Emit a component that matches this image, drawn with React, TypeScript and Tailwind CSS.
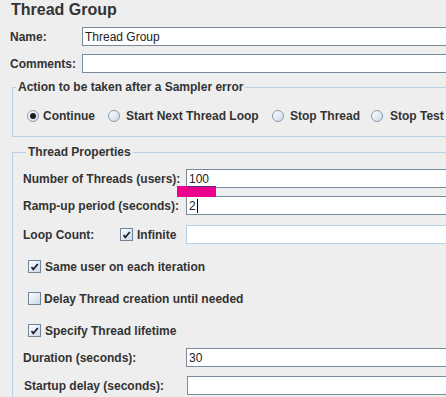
import React from "react";

function Radio({ on }: { on?: boolean }) {
  return (
    <span className="w-[12px] h-[12px] rounded-full border border-[#8a9bac] bg-linear-to-br from-white to-[#cbdaea] flex items-center justify-center shrink-0">
      {on && <span className="w-[6px] h-[6px] rounded-full bg-[#1e1e1e]" />}
    </span>
  );
}

function Check({ checked }: { checked?: boolean }) {
  return (
    <span className="w-[13px] h-[13px] border border-[#6f8296] bg-linear-to-br from-white to-[#c6d8ec] flex items-center justify-center shrink-0">
      {checked && (
        <svg width="9" height="9" viewBox="0 0 9 9">
          <path d="M1.5 5 L3.3 7.3 L7.8 2" stroke="#1f1f1f" strokeWidth="1.7" fill="none" />
        </svg>
      )}
    </span>
  );
}

function Field({ value, disabled, cursor }: { value?: string; disabled?: boolean; cursor?: boolean }) {
  return (
    <div
      className={
        "h-[19px] w-[420px] shrink-0 bg-white border pl-[2px] pt-px flex items-center font-normal text-[12px] text-[#222] " +
        (disabled ? "border-[#b8cfe5]" : "border-[#7a8a99]")
      }
    >
      <span>{value ?? "\u00a0"}</span>
      {cursor && <span className="w-px h-[14px] bg-black ml-[1px]" />}
    </div>
  );
}

function Row({ label, value, cursor, className }: { label: string; value?: string; cursor?: boolean; className: string }) {
  return (
    <div className={"grid grid-cols-[163px_420px] items-center h-[19px] " + className}>
      <span>{label}</span>
      <Field value={value} cursor={cursor} />
    </div>
  );
}

export default function App() {
  return (
    <div
      className="relative w-[446px] h-[397px] overflow-hidden bg-[#eeeeee] text-[#333333] font-bold text-[12px] leading-[14px]"
      style={{ fontFamily: '"Liberation Sans", Arial, sans-serif' }}
    >
      {/* title */}
      <div className="h-[20px] pl-[11px] text-[16px] leading-[20px]">Thread Group</div>

      <div className="pl-[10px] w-[700px]">
        {/* name + comments */}
        <div className="grid grid-cols-[72px_420px] items-center h-[19px] mt-[7px]">
          <span>Name:</span>
          <Field value="Thread Group" />
        </div>
        <div className="grid grid-cols-[72px_420px] items-center h-[19px] mt-[8px]">
          <span>Comments:</span>
          <Field />
        </div>

        {/* sampler error action */}
        <fieldset className="ml-[2px] mt-[7px] w-[600px] border border-[#b8cfe5] pb-[10px]">
          <legend className="ml-[3px] px-[2px]">Action to be taken after a Sampler error</legend>
          <div className="flex items-center h-[20px] mt-[12px] pl-[14px]">
            <div className="w-[81px] flex items-center gap-[4px]">
              <Radio on />
              <span>Continue</span>
            </div>
            <div className="w-[164px] flex items-center gap-[6px]">
              <Radio />
              <span>Start Next Thread Loop</span>
            </div>
            <div className="w-[99px] flex items-center gap-[6px]">
              <Radio />
              <span>Stop Thread</span>
            </div>
            <div className="flex items-center gap-[7px]">
              <Radio />
              <span>Stop Test</span>
            </div>
          </div>
        </fieldset>

        {/* thread properties */}
        <fieldset className="ml-[2px] mt-[8px] w-[600px] border border-[#b8cfe5] pl-[10px] pb-[40px]">
          <legend className="ml-[3px] px-[2px]">Thread Properties</legend>
          <Row label="Number of Threads (users):" value="100" className="mt-[10px]" />
          <Row label="Ramp-up period (seconds):" value="2" cursor className="mt-[8px]" />
          <div className="flex items-center h-[19px] mt-[10px]">
            <span className="w-[97px] shrink-0">Loop Count:</span>
            <Check checked />
            <span className="ml-[4px] w-[49px]">Infinite</span>
            <Field disabled />
          </div>
          <div className="flex items-center h-[23px] mt-[11px] pl-[5px] gap-[4px]">
            <Check checked />
            <span>Same user on each iteration</span>
          </div>
          <div className="flex items-center h-[23px] mt-[9px] pl-[5px] gap-[3px]">
            <Check />
            <span>Delay Thread creation until needed</span>
          </div>
          <div className="flex items-center h-[23px] mt-[9px] pl-[5px] gap-[4px]">
            <Check checked />
            <span>Specify Thread lifetime</span>
          </div>
          <Row label="Duration (seconds):" value="30" className="mt-[6px]" />
          <Row label="Startup delay (seconds):" className="mt-[9px] pl-[1px]" />
        </fieldset>
      </div>

      {/* highlight marker */}
      <div className="absolute left-[177px] top-[186px] w-[39px] h-[11px] bg-[#ec008c]" />
      <div className="absolute left-[188px] top-[186px] w-[28px] h-px bg-[#5b2a86]" />
    </div>
  );
}
